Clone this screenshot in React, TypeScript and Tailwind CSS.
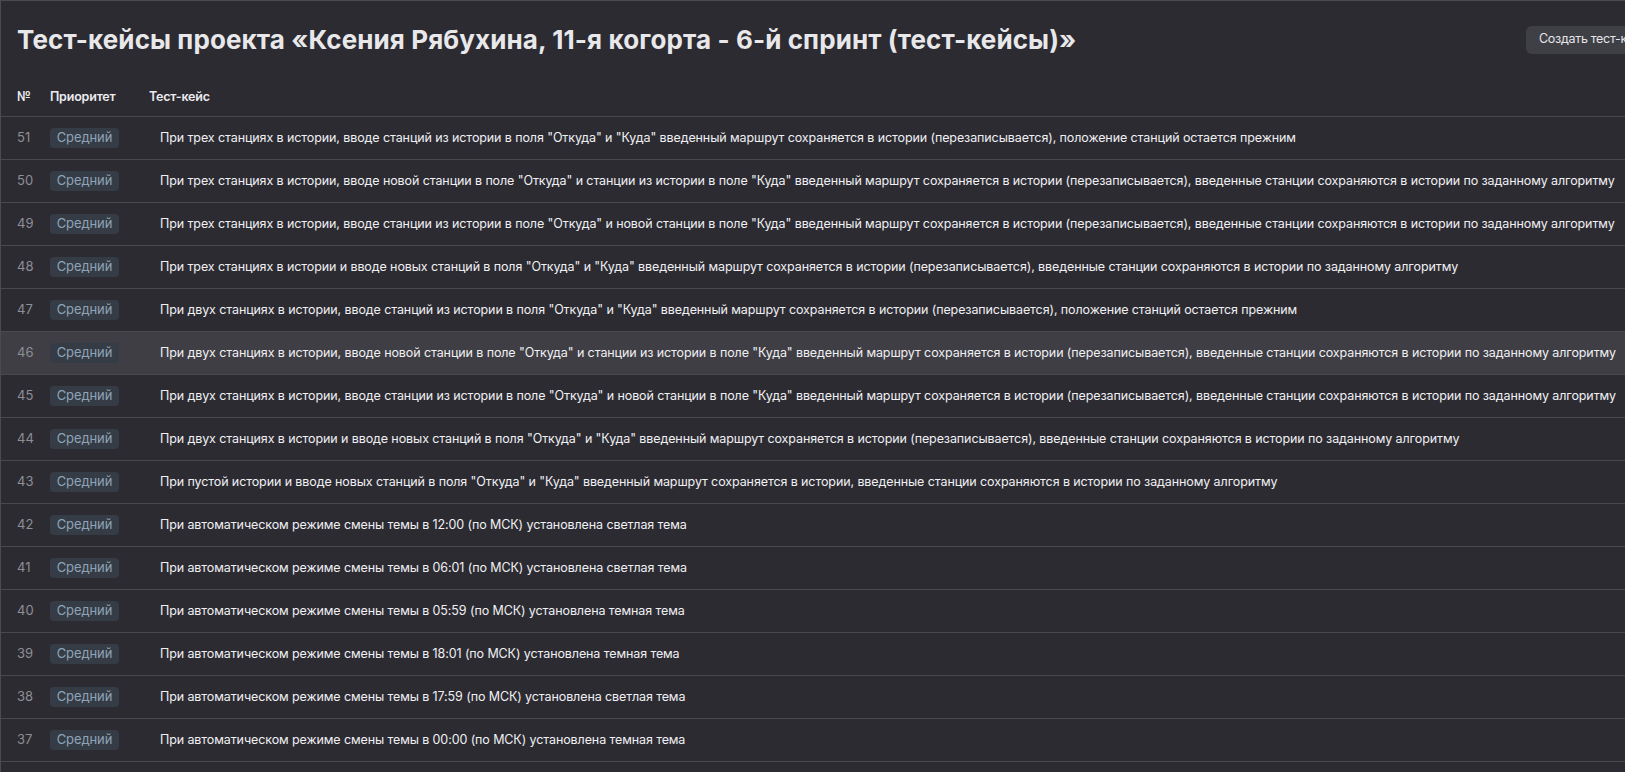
import React from "react";

type TestCase = { id: number; priority: string; title: string };

const cases: TestCase[] = [
  { id: 51, priority: "Средний", title: 'При трех станциях в истории, вводе станций из истории в поля "Откуда" и "Куда" введенный маршрут сохраняется в истории (перезаписывается), положение станций остается прежним' },
  { id: 50, priority: "Средний", title: 'При трех станциях в истории, вводе новой станции в поле "Откуда" и станции из истории в поле "Куда" введенный маршрут сохраняется в истории (перезаписывается), введенные станции сохраняются в истории по заданному алгоритму' },
  { id: 49, priority: "Средний", title: 'При трех станциях в истории, вводе станции из истории в поле "Откуда" и новой станции в поле "Куда" введенный маршрут сохраняется в истории (перезаписывается), введенные станции сохраняются в истории по заданному алгоритму' },
  { id: 48, priority: "Средний", title: 'При трех станциях в истории и вводе новых станций в поля "Откуда" и "Куда" введенный маршрут сохраняется в истории (перезаписывается), введенные станции сохраняются в истории по заданному алгоритму' },
  { id: 47, priority: "Средний", title: 'При двух станциях в истории, вводе станций из истории в поля "Откуда" и "Куда" введенный маршрут сохраняется в истории (перезаписывается), положение станций остается прежним' },
  { id: 46, priority: "Средний", title: 'При двух станциях в истории, вводе новой станции в поле "Откуда" и станции из истории в поле "Куда" введенный маршрут сохраняется в истории (перезаписывается), введенные станции сохраняются в истории по заданному алгоритму' },
  { id: 45, priority: "Средний", title: 'При двух станциях в истории, вводе станции из истории в поле "Откуда" и новой станции в поле "Куда" введенный маршрут сохраняется в истории (перезаписывается), введенные станции сохраняются в истории по заданному алгоритму' },
  { id: 44, priority: "Средний", title: 'При двух станциях в истории и вводе новых станций в поля "Откуда" и "Куда" введенный маршрут сохраняется в истории (перезаписывается), введенные станции сохраняются в истории по заданному алгоритму' },
  { id: 43, priority: "Средний", title: 'При пустой истории и вводе новых станций в поля "Откуда" и "Куда" введенный маршрут сохраняется в истории, введенные станции сохраняются в истории по заданному алгоритму' },
  { id: 42, priority: "Средний", title: "При автоматическом режиме смены темы в 12:00 (по МСК) установлена светлая тема" },
  { id: 41, priority: "Средний", title: "При автоматическом режиме смены темы в 06:01 (по МСК) установлена светлая тема" },
  { id: 40, priority: "Средний", title: "При автоматическом режиме смены темы в 05:59 (по МСК) установлена темная тема" },
  { id: 39, priority: "Средний", title: "При автоматическом режиме смены темы в 18:01 (по МСК) установлена темная тема" },
  { id: 38, priority: "Средний", title: "При автоматическом режиме смены темы в 17:59 (по МСК) установлена светлая тема" },
  { id: 37, priority: "Средний", title: "При автоматическом режиме смены темы в 00:00 (по МСК) установлена темная тема" },
];

const HOVERED = 46;

export default function App() {
  return (
    <div
      className="h-[772px] w-full overflow-hidden border-t border-l border-[#4a4a51] bg-[#2c2b32] text-[#ececef]"
      style={{ fontFamily: "Inter, 'Noto Sans', sans-serif" }}
    >
      {/* header */}
      <div className="flex h-[77px] items-center justify-between pl-4">
        <h1 className="whitespace-nowrap text-[26px] font-bold tracking-[0.1px] text-[#e8e8ea]">
          Тест-кейсы проекта «Ксения Рябухина, 11-я когорта - 6-й спринт (тест-кейсы)»
        </h1>
        <button className="h-[28px] w-[99px] shrink-0 overflow-hidden whitespace-nowrap rounded-l-md bg-[#3f3f46] pl-[13px] text-left text-[12.5px] tracking-[-0.3px] text-[#e6e6e8]">
          Создать тест-кейс
        </button>
      </div>

      {/* column headers */}
      <div className="flex h-[39px] items-center border-b border-[#48484f] text-[12.5px] font-semibold tracking-[-0.2px] text-[#ececef]">
        <span className="w-[49px] shrink-0 pl-4">№</span>
        <span className="w-[99px] shrink-0">Приоритет</span>
        <span className="whitespace-nowrap">Тест-кейс</span>
      </div>

      {cases.map((c) => (
        <div
          key={c.id}
          className={
            "flex h-[43px] items-center border-b border-[#48484f] text-[12.5px] " +
            (c.id === HOVERED ? "bg-[#3f3e45]" : "")
          }
        >
          <span className="w-[49px] shrink-0 pl-4 text-[13px] text-[#8e8e94]">{c.id}</span>
          <span className="flex h-[20px] w-[69px] shrink-0 items-center justify-center rounded bg-[#363c46] text-[13px] tracking-[-0.1px] text-[#8ea4b6]">
            {c.priority}
          </span>
          <span className="shrink-0 whitespace-nowrap pl-[41px] tracking-[-0.1px] text-[#f0f0f2]">{c.title}</span>
        </div>
      ))}
    </div>
  );
}
